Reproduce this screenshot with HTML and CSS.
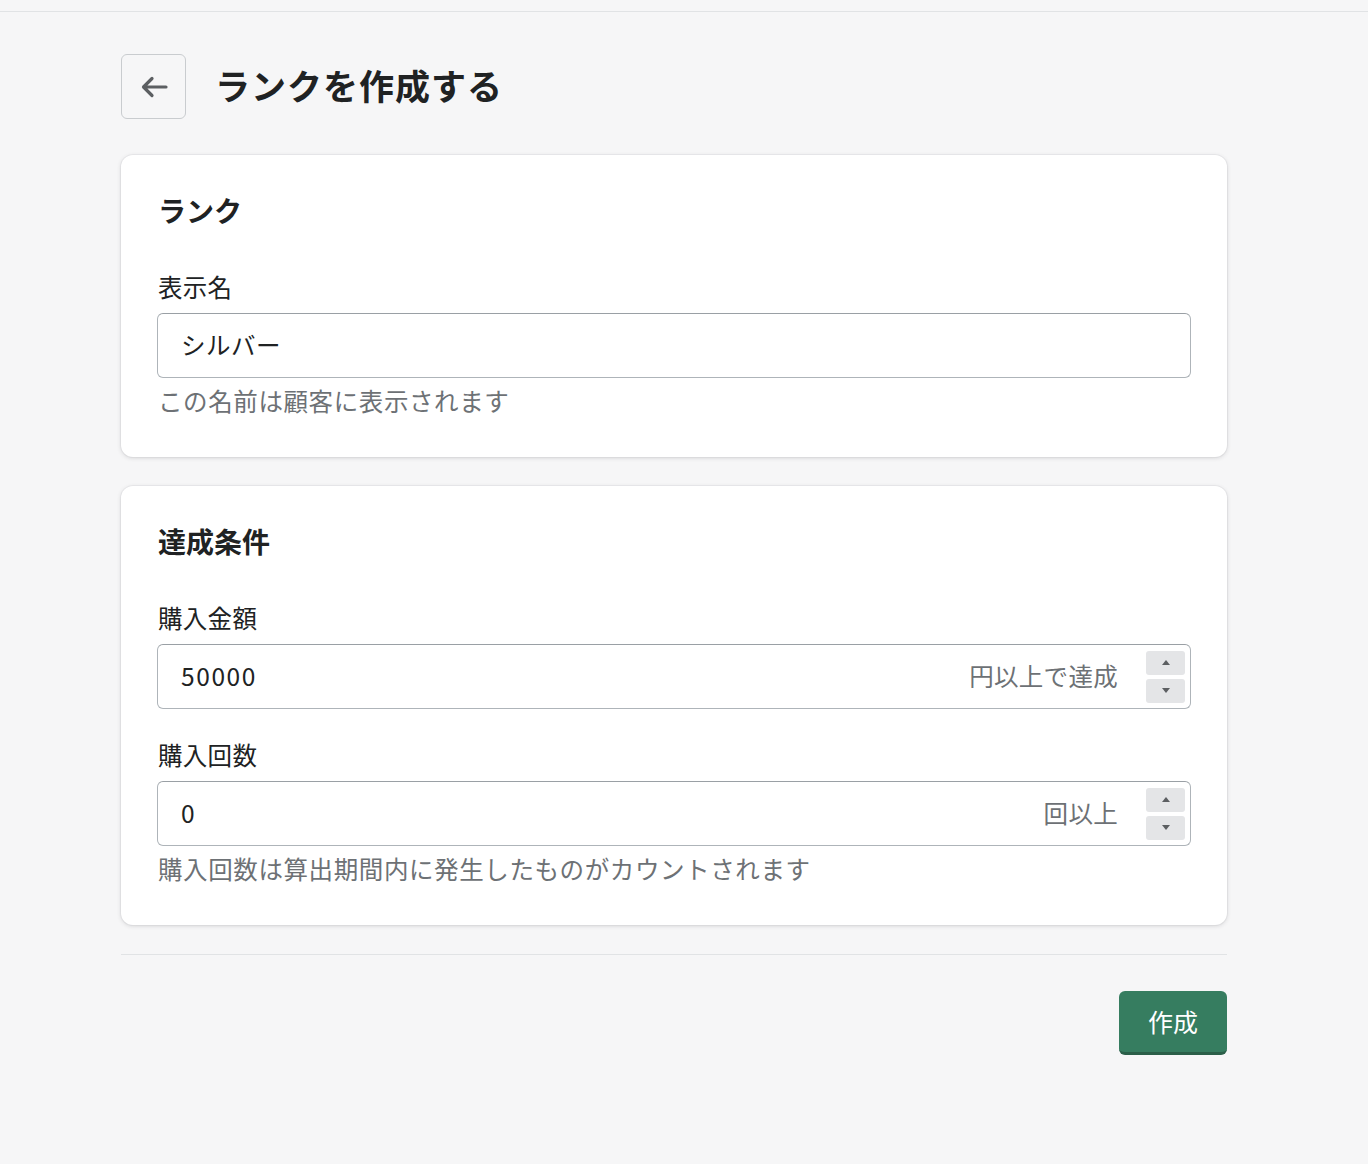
FILE: index.html
```html
<!DOCTYPE html>
<html lang="ja">
<head>
<meta charset="utf-8">
<link rel="stylesheet" href="styles.css">
</head>
<body>
<div class="topbar"></div>
<main class="page">
  <header class="page-header">
    <button class="back-btn" aria-label="戻る">
      <svg width="30" height="30" viewBox="0 0 30 30" fill="none">
        <path d="M27 15H5M13 6.5L4.5 15L13 23.5" stroke="#5c5f62" stroke-width="3.2" stroke-linecap="round" stroke-linejoin="round"/>
      </svg>
    </button>
    <h1 class="page-title">ランクを作成する</h1>
  </header>

  <section class="card">
    <h2 class="card-title">ランク</h2>
    <div class="field">
      <label class="label">表示名</label>
      <div class="input"><span class="input-value">シルバー</span></div>
      <p class="help">この名前は顧客に表示されます</p>
    </div>
  </section>

  <section class="card">
    <h2 class="card-title">達成条件</h2>
    <div class="field">
      <label class="label">購入金額</label>
      <div class="input">
        <span class="input-value num">50000</span>
        <span class="suffix">円以上で達成</span>
        <span class="spinner">
          <span class="spin-btn"><span class="tri-up"></span></span>
          <span class="spin-btn"><span class="tri-down"></span></span>
        </span>
      </div>
    </div>
    <div class="field field-gap">
      <label class="label">購入回数</label>
      <div class="input">
        <span class="input-value num">0</span>
        <span class="suffix">回以上</span>
        <span class="spinner">
          <span class="spin-btn"><span class="tri-up"></span></span>
          <span class="spin-btn"><span class="tri-down"></span></span>
        </span>
      </div>
      <p class="help">購入回数は算出期間内に発生したものがカウントされます</p>
    </div>
  </section>

  <div class="divider"></div>
  <div class="actions">
    <button class="primary-btn">作成</button>
  </div>
</main>
</body>
</html>
```

FILE: styles.css
```css
* { box-sizing: border-box; }
html, body {
  margin: 0;
  padding: 0;
  background: #f6f6f7;
  font-family: "Noto Sans CJK JP", "Noto Sans", sans-serif;
  color: #202223;
}
.topbar {
  height: 12px;
  border-bottom: 1px solid #e1e3e5;
}
.page {
  width: 1106px;
  margin-left: 121px;
  padding-top: 42px;
  padding-bottom: 60px;
}
.page-header {
  display: flex;
  align-items: center;
  gap: 29px;
  margin-bottom: 36px;
}
.back-btn {
  width: 65px;
  height: 65px;
  border: 1px solid #c9cccf;
  border-radius: 6px;
  background: transparent;
  display: flex;
  align-items: center;
  justify-content: center;
  padding: 0;
  flex: none;
}
.page-title {
  margin: 0 0 4px;
  font-size: 35px;
  font-weight: 700;
  line-height: 44px;
  letter-spacing: 1px;
}
.card {
  background: #fff;
  border-radius: 12px;
  box-shadow: 0 0 0 1px rgba(63,63,68,0.04), 0 1px 4px rgba(63,63,68,0.18);
  padding: 35px 36px 37px 37px;
  margin-bottom: 29px;
}
.card-title {
  margin: 0 0 40px;
  font-size: 28px;
  font-weight: 700;
  line-height: 40px;
}
.field { display: flex; flex-direction: column; }
.field-gap { margin-top: 29px; }
.label {
  font-size: 24.5px;
  line-height: 36px;
  letter-spacing: 0.3px;
  margin-bottom: 7px;
  padding-bottom: 1px;
  margin-top: -1px;
}
.input {
  height: 65px;
  margin-left: -1px;
  border: 1px solid #aeb4b9;
  border-top-color: #9aa0a5;
  border-radius: 6px;
  display: flex;
  align-items: center;
  padding: 0 5px 2px 23px;
  font-size: 24.5px;
}
.input-value {
  flex: 1;
  letter-spacing: 0.5px;
}
.input-value.num {
  letter-spacing: 1.6px;
}
.suffix {
  color: #6d7175;
  letter-spacing: 0.3px;
  margin-right: 28px;
}
.spinner {
  display: flex;
  flex-direction: column;
  gap: 4px;
  margin-top: 2px;
}
.spin-btn {
  width: 39px;
  height: 24px;
  background: #e4e5e7;
  border-radius: 3px;
  display: flex;
  align-items: center;
  justify-content: center;
}
.tri-up, .tri-down {
  width: 0;
  height: 0;
  border-left: 4.5px solid transparent;
  border-right: 4.5px solid transparent;
}
.tri-up { border-bottom: 5px solid #5c5f62; }
.tri-down { border-top: 5px solid #5c5f62; }
.help {
  margin: 5px 0 0;
  padding-bottom: 1px;
  font-size: 24.5px;
  line-height: 36px;
  color: #6d7175;
  letter-spacing: 0.6px;
}
.divider {
  height: 1px;
  background: #e1e3e5;
}
.actions {
  display: flex;
  justify-content: flex-end;
  padding-top: 36px;
}
.primary-btn {
  width: 108px;
  height: 64px;
  background: #367d60;
  border: none;
  border-bottom: 3px solid #2b5f49;
  border-radius: 6px;
  color: #fff;
  font-family: "Noto Sans CJK JP", "Noto Sans", sans-serif;
  font-size: 25px;
  padding: 0 0 2px;
}
```
